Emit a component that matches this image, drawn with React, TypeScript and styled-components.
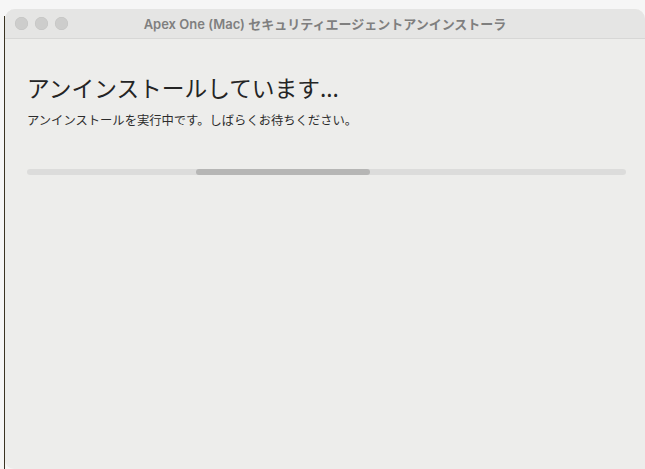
import React from "react";
import styled, { createGlobalStyle } from "styled-components";

const Global = createGlobalStyle`
  html, body {
    margin: 0;
    padding: 0;
    width: 645px;
    height: 469px;
    overflow: hidden;
    background: #f6f6f6;
  }
  #root { height: 100%; }
`;

const Desktop = styled.div`
  box-sizing: border-box;
  height: 469px;
  padding: 9px 0 0 5px;
  display: flex;
  background-color: #f6f6f6;
  background-image: linear-gradient(to right, transparent 4px, #3a3322 4px 5.5px, transparent 5.5px);
  background-position: 0 16px;
  background-repeat: no-repeat;
`;

const Window = styled.div`
  flex: 1;
  display: flex;
  flex-direction: column;
  background: #ededeb;
  border-radius: 10px 10px 0 9px;
  overflow: hidden;
  font-family: "Inter", "Noto Sans CJK JP", sans-serif;
`;

const TitleBar = styled.div`
  height: 29px;
  flex: none;
  display: flex;
  align-items: center;
  position: relative;
  background: #e5e5e4;
  border-bottom: 1px solid #d7d7d6;
`;

const Lights = styled.div`
  display: flex;
  gap: 7px;
  padding-left: 10px;
`;

const Light = styled.span`
  width: 13px;
  height: 13px;
  border-radius: 50%;
  background: #cdcdcc;
  box-shadow: inset 0 0 0 0.5px #c2c2c1;
`;

const Title = styled.div`
  position: absolute;
  left: 0;
  right: 0;
  text-align: center;
  font-size: 13px;
  font-weight: 600;
  color: #7f7f7f;
  pointer-events: none;
`;

const Content = styled.div`
  flex: 1;
  display: flex;
  flex-direction: column;
  padding: 34px 19px 0 22px;
`;

const Heading = styled.h1`
  margin: 0;
  font-size: 22.7px;
  line-height: 30px;
  font-weight: 400;
  color: #242424;
  font-family: "Noto Sans CJK JP", sans-serif;
`;

const Message = styled.p`
  margin: 9px 0 0;
  font-size: 12.3px;
  line-height: 16px;
  color: #2c2c2c;
  font-family: "Noto Sans CJK JP", sans-serif;
`;

const Track = styled.div`
  margin-top: 41px;
  height: 6px;
  border-radius: 3px;
  background: #dcdcdb;
  position: relative;
  overflow: hidden;
`;

const Fill = styled.div`
  position: absolute;
  top: 0;
  bottom: 0;
  border-radius: 3px;
  background: #b6b6b5;
`;

export default function App() {
  const progress = { start: 169, length: 174 };
  return (
    <>
      <Global />
      <Desktop>
        <Window>
          <TitleBar>
            <Lights>
              <Light />
              <Light />
              <Light />
            </Lights>
            <Title>Apex One (Mac) セキュリティエージェントアンインストーラ</Title>
          </TitleBar>
          <Content>
            <Heading>アンインストールしています...</Heading>
            <Message>アンインストールを実行中です。しばらくお待ちください。</Message>
            <Track>
              <Fill style={{ left: progress.start, width: progress.length }} />
            </Track>
          </Content>
        </Window>
      </Desktop>
    </>
  );
}
